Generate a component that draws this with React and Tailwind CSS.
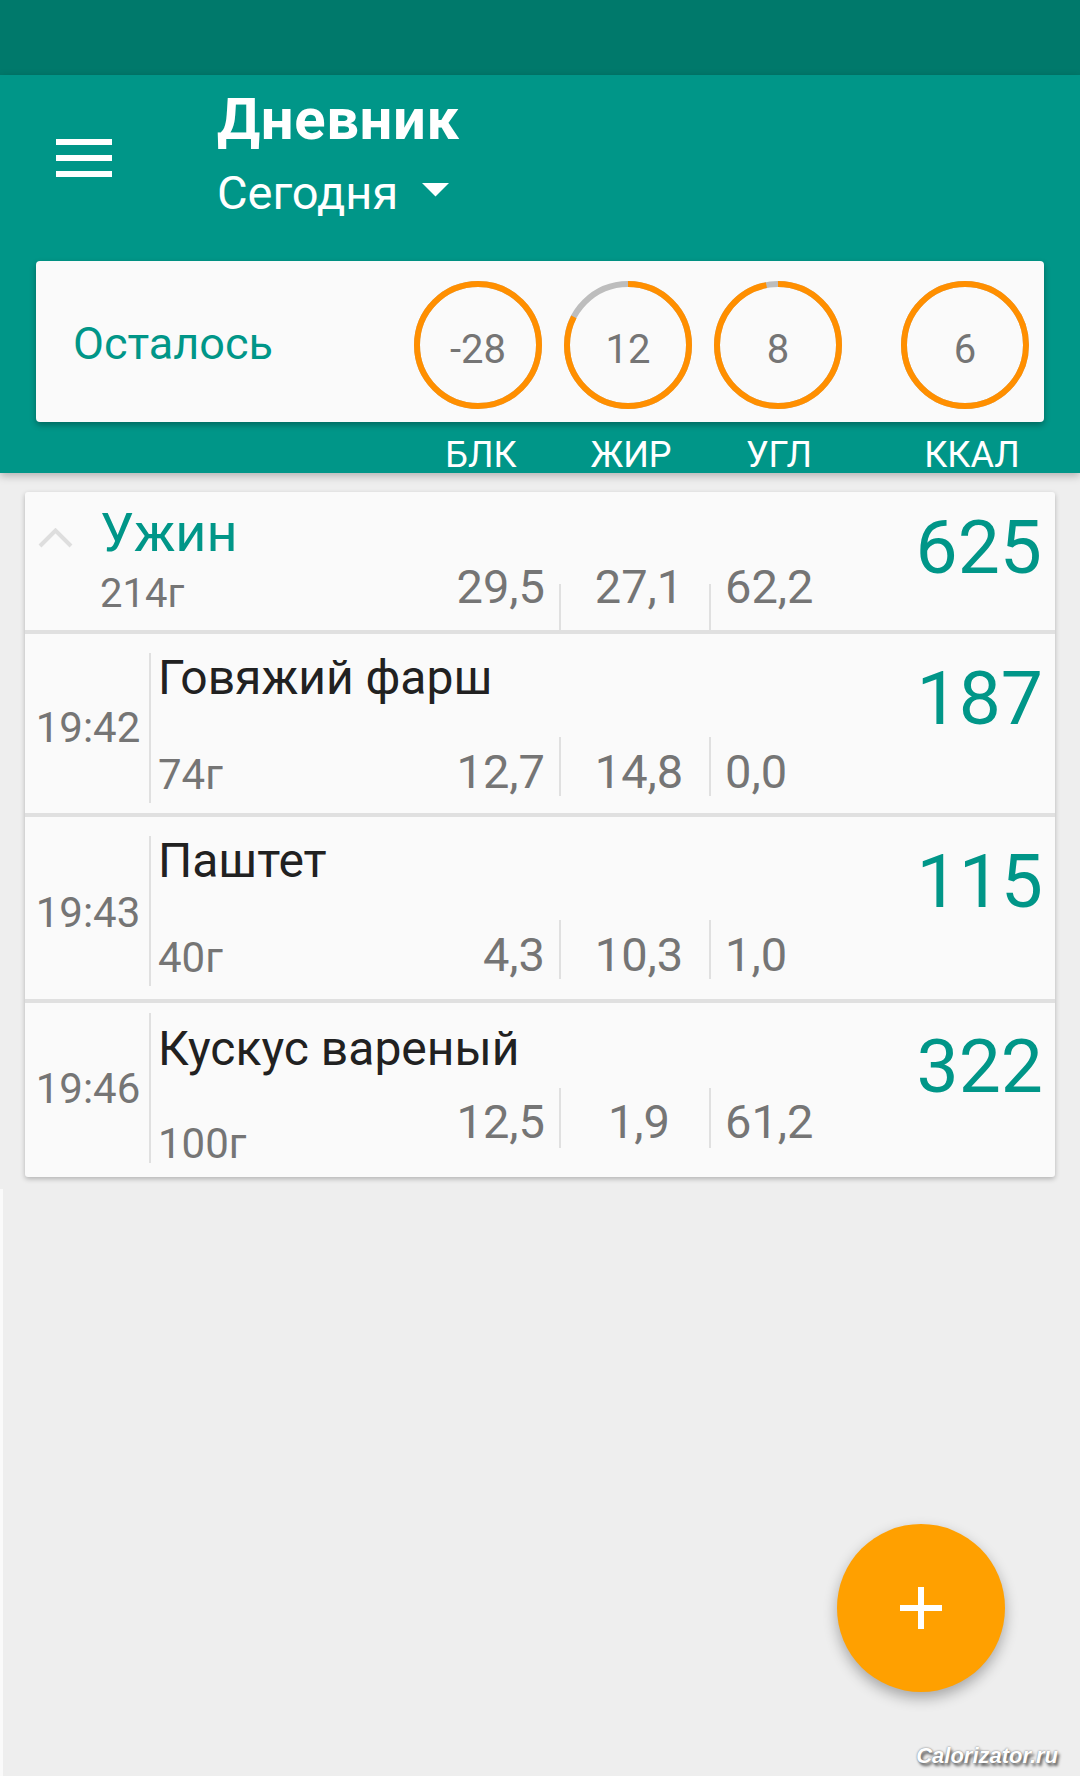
import React from 'react';

const rings = [
  { value: '-28', fill: 1 },
  { value: '12', fill: 0.825 },
  { value: '8', fill: 0.968 },
  { value: '6', fill: 1 },
];

const normal = {
  time: 'pt-[9px]',
  timeDiv: 'mt-[19px] h-[150px]',
  name: 'mt-[19px]',
  weight: 'mt-[51px]',
  text: 'mt-[45px]',
  div: 'mt-[34px] h-[59px]',
  kcal: 'pt-[26px]',
};

const lifted = {
  time: 'pb-[2px]',
  timeDiv: 'mt-[10px] h-[150px]',
  name: 'mt-[21px]',
  weight: 'mt-[49px]',
  text: 'mt-[24px]',
  div: 'mt-[14px] h-[60px]',
  kcal: 'pt-[25px]',
};

const rows = [
  { time: '19:42', name: 'Говяжий фарш', weight: '74г', p: '12,7', f: '14,8', c: '0,0', kcal: '187', s: normal, h: 'flex h-[179px]' },
  { time: '19:43', name: 'Паштет', weight: '40г', p: '4,3', f: '10,3', c: '1,0', kcal: '115', s: normal, h: 'flex h-[182px]' },
  { time: '19:46', name: 'Кускус вареный', weight: '100г', p: '12,5', f: '1,9', c: '61,2', kcal: '322', s: lifted, h: 'flex h-[174px]' },
];

function Ring({ value, fill }) {
  const r = 61;
  const c = 2 * Math.PI * r;
  return (
    <div className="relative w-[128px] h-[128px] flex items-center justify-center">
      <svg width="128" height="128" viewBox="0 0 128 128" className="absolute inset-0 -rotate-90">
        <circle cx="64" cy="64" r={r} fill="none" stroke="#bdbdbd" strokeWidth="6" />
        <circle cx="64" cy="64" r={r} fill="none" stroke="#ff8f00" strokeWidth="6" strokeDasharray={`${c * fill} ${c}`} />
      </svg>
      <span className="relative pt-[9px] text-[40px] leading-none text-[#757575]">{value}</span>
    </div>
  );
}

function Macros({ p, f, c, text, div }) {
  return (
    <div className="flex items-start text-[47px] leading-none text-[#757575]">
      <div className={`w-[120px] text-right pr-[14px] ${text}`}>{p}</div>
      <div className={`w-[2px] bg-[#e0e0e0] ${div}`} />
      <div className={`w-[148px] text-center pl-[8px] ${text}`}>{f}</div>
      <div className={`w-[2px] bg-[#e0e0e0] ${div}`} />
      <div className={`w-[139px] pl-[14px] ${text}`}>{c}</div>
    </div>
  );
}

function FoodRow({ item }) {
  const s = item.s;
  return (
    <div className={item.h}>
      <div className={`w-[124px] shrink-0 flex items-center justify-center pl-[2px] text-[42px] leading-none text-[#757575] ${s.time}`}>
        {item.time}
      </div>
      <div className={`w-[2px] shrink-0 bg-[#e0e0e0] ${s.timeDiv}`} />
      <div className="flex-1 flex flex-col pl-[7px]">
        <div className={`text-[48px] leading-[50px] text-[#212121] ${s.name}`}>{item.name}</div>
        <div className="flex items-start">
          <div className={`flex-1 text-[42px] leading-none text-[#757575] ${s.weight}`}>{item.weight}</div>
          <Macros p={item.p} f={item.f} c={item.c} text={s.text} div={s.div} />
        </div>
      </div>
      <div className={`w-[205px] shrink-0 text-right pr-[12px] text-[75px] leading-[76px] text-[#009688] ${s.kcal}`}>
        {item.kcal}
      </div>
    </div>
  );
}

export default function App() {
  return (
    <div className="relative w-[1080px] h-[1776px] overflow-hidden bg-[#eeeeee] flex flex-col font-['Roboto',sans-serif]">
      <div className="h-[75px] shrink-0 bg-[#00796b]" />

      <div className="relative z-10 h-[398px] shrink-0 bg-[#009688] shadow-[0_3px_8px_rgba(0,0,0,0.25)] flex flex-col">
        <div className="h-[187px] flex items-start">
          <div className="ml-[56px] mt-[64px] w-[56px] flex flex-col gap-[10px]">
            <div className="h-[6px] bg-white" />
            <div className="h-[6px] bg-white" />
            <div className="h-[6px] bg-white" />
          </div>
          <div className="ml-[105px] mt-[14px] flex flex-col text-white">
            <div className="text-[58px] leading-[60px] font-bold tracking-[0.6px]">Дневник</div>
            <div className="mt-[19px] flex items-start">
              <span className="text-[47px] leading-[50px]">Сегодня</span>
              <svg className="ml-[24px] mt-[15px]" width="27" height="14" viewBox="0 0 27 14">
                <polygon points="0,0 27,0 13.5,13.5" fill="white" />
              </svg>
            </div>
          </div>
        </div>

        <div className="mx-[36px] h-[161px] bg-[#fafafa] rounded-[4px] shadow-[0_3px_6px_rgba(0,0,0,0.3)] flex items-start">
          <div className="w-[378px] shrink-0 pl-[37px] pt-[60px] text-[45px] leading-none text-[#009688]">Осталось</div>
          <div className="mt-[20px] flex gap-[22px]">
            {rings.map((r, i) => (
              <div key={i} className={i === 3 ? 'ml-[37px]' : ''}>
                <Ring value={r.value} fill={r.fill} />
              </div>
            ))}
          </div>
        </div>

        <div className="mt-[15px] ml-[414px] flex gap-[22px] text-[36px] leading-none text-white">
          <div className="w-[128px] text-center pl-[6px]">БЛК</div>
          <div className="w-[128px] text-center pl-[6px]">ЖИР</div>
          <div className="w-[128px] text-center pl-[2px]">УГЛ</div>
          <div className="w-[128px] text-center ml-[37px] pl-[14px]">ККАЛ</div>
        </div>
      </div>

      <div className="mx-[25px] mt-[19px] bg-[#fafafa] rounded-[3px] shadow-[0_2px_5px_rgba(0,0,0,0.25)] flex flex-col">
        <div className="flex h-[138px]">
          <div className="w-[75px] shrink-0">
            <svg className="ml-[13px] mt-[36px]" width="35" height="20" viewBox="0 0 35 20">
              <polyline points="2,18 17.5,2.5 33,18" fill="none" stroke="#dedede" strokeWidth="4" />
            </svg>
          </div>
          <div className="flex-1 flex flex-col">
            <div className="mt-[11px] text-[54px] leading-[60px] text-[#009688]">Ужин</div>
            <div className="flex items-start">
              <div className="flex-1 mt-[11px] text-[40px] leading-none text-[#757575]">214г</div>
              <Macros p="29,5" f="27,1" c="62,2" text="mt-0" div="mt-[21px] h-[46px]" />
            </div>
          </div>
          <div className="w-[205px] shrink-0 text-right pr-[13px] pt-[17px] text-[75px] leading-[76px] text-[#009688]">625</div>
        </div>

        {rows.map((item, i) => (
          <React.Fragment key={i}>
            <div className="h-[4px] bg-[#e0e0e0]" />
            <FoodRow item={item} />
          </React.Fragment>
        ))}
      </div>

      <div className="flex-1 mt-[12px] border-l-[3px] border-[#fafafa]" />

      <div className="absolute right-[75px] bottom-[84px] w-[168px] h-[168px] rounded-full bg-[#ffa000] shadow-[0_6px_14px_rgba(0,0,0,0.3)] flex items-center justify-center">
        <svg width="42" height="42" viewBox="0 0 42 42">
          <rect x="18" y="0" width="6" height="42" fill="white" />
          <rect x="0" y="18" width="42" height="6" fill="white" />
        </svg>
      </div>

      <div className="absolute right-[22px] bottom-[9px] font-['Liberation_Sans',sans-serif] text-[22px] leading-none font-bold italic text-white [text-shadow:0_0_2px_#666,2px_3px_3px_rgba(0,0,0,0.6)]">
        Calorizator.ru
      </div>
    </div>
  );
}
